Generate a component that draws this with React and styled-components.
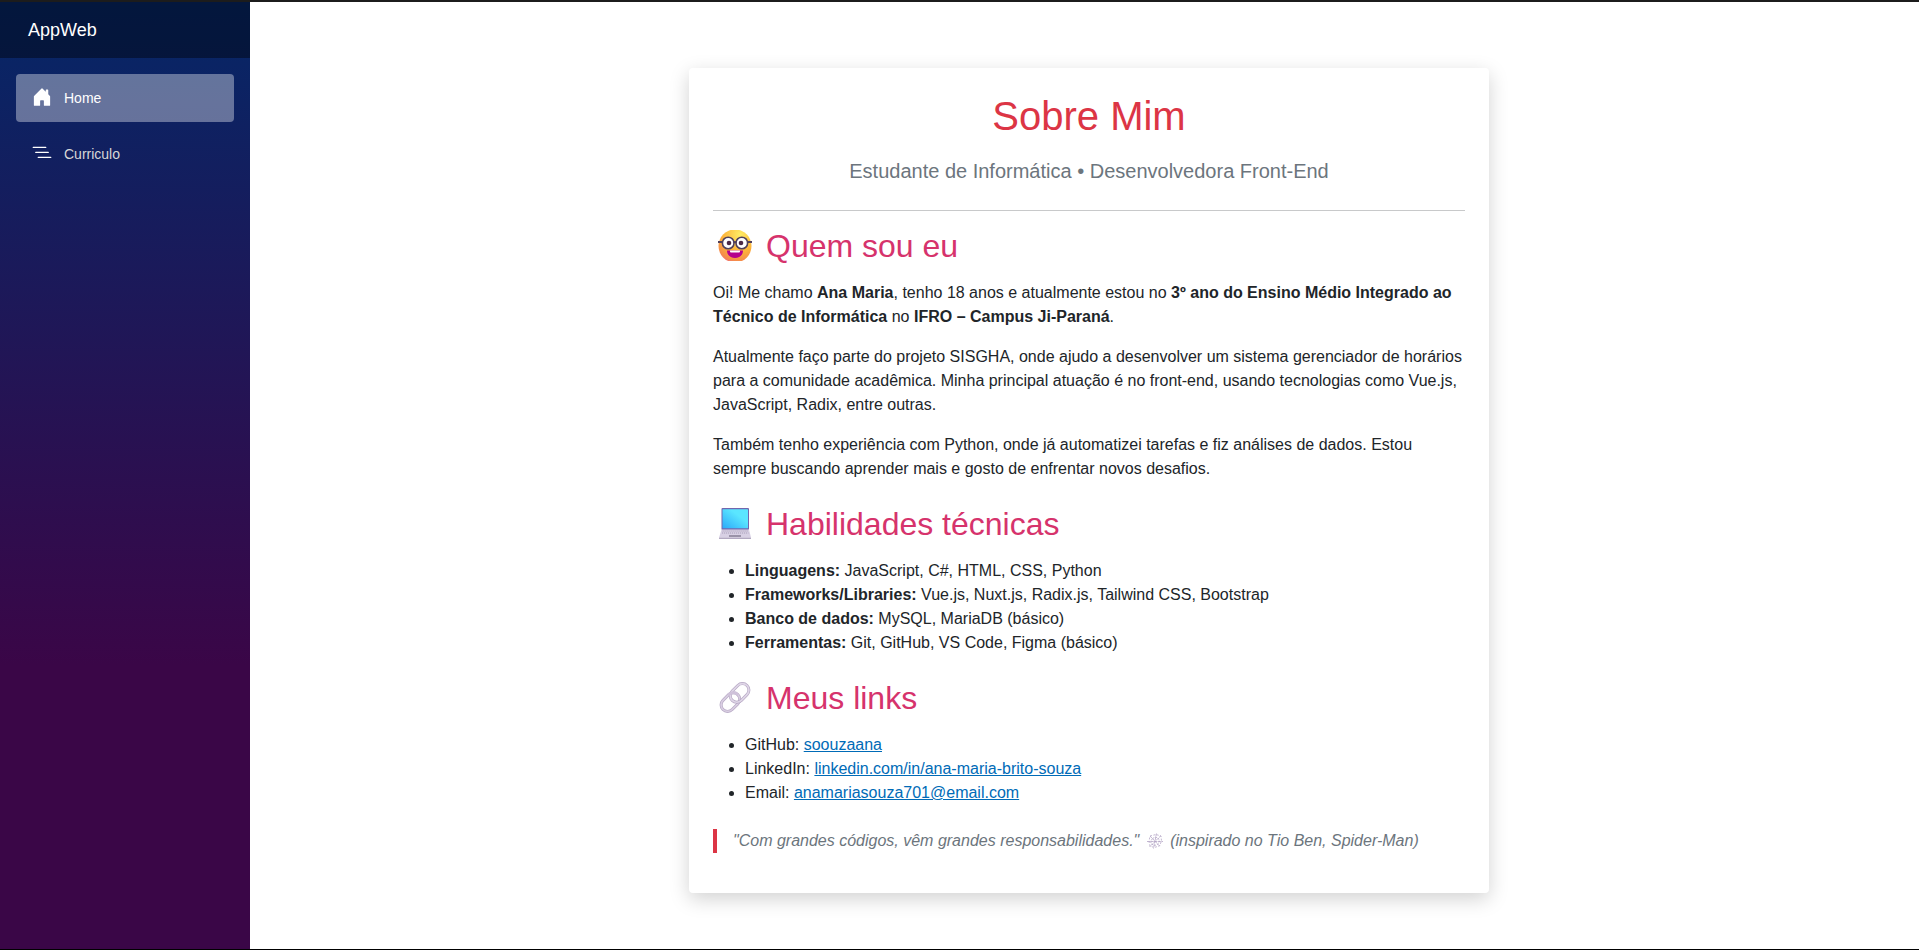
import React from "react";
import styled, { createGlobalStyle } from "styled-components";

const GlobalStyle = createGlobalStyle`
  *, *::before, *::after { box-sizing: border-box; }
  body {
    margin: 0;
    background: #fff;
    color: #212529;
    font-family: "Liberation Sans", Arial, sans-serif;
    font-size: 16px;
    line-height: 24px;
  }
`;

const Page = styled.div`
  display: flex;
  min-height: 100vh;
  border-top: 2px solid #1c1c1c;
  border-bottom: 1px solid #000;
`;

const Sidebar = styled.aside`
  flex: 0 0 250px;
  background: linear-gradient(180deg, rgb(5, 39, 103) 0%, #3a0647 70%);
`;

const TopRow = styled.div`
  display: flex;
  align-items: center;
  height: 56px;
  padding-left: 28px;
  background: rgba(0, 0, 0, 0.4);
`;

const Brand = styled.a`
  color: #fff;
  font-size: 18px;
  text-decoration: none;
`;

const Nav = styled.nav`
  display: flex;
  flex-direction: column;
  gap: 8px;
  padding: 16px;
`;

const NavLink = styled.a`
  display: flex;
  align-items: center;
  gap: 12px;
  height: 48px;
  padding: 0 16px;
  border-radius: 4px;
  color: ${({ $active }) => ($active ? "#fff" : "#d7d7d7")};
  background: ${({ $active }) => ($active ? "rgba(255, 255, 255, 0.37)" : "transparent")};
  font-size: 14px;
  text-decoration: none;
`;

const NavIcon = styled.svg`
  width: 20px;
  height: 20px;
  margin-bottom: 2px;
  fill: #fff;
`;

const Main = styled.main`
  flex: 1;
  min-width: 0;
  padding: 66px 24px 48px 33px;
`;

const Card = styled.article`
  max-width: 800px;
  margin: 0 auto;
  padding: 24px 24px 40px;
  border-radius: 4px;
  background: #fff;
  box-shadow: 0 6px 20px rgba(0, 0, 0, 0.18);
`;

const Title = styled.h1`
  margin: 0 0 16px;
  color: #dc3545;
  font-size: 40px;
  font-weight: 400;
  line-height: 48px;
  text-align: center;
`;

const Lead = styled.p`
  margin: 0 0 24px;
  color: #6c757d;
  font-size: 20px;
  line-height: 30px;
  text-align: center;
`;

const Divider = styled.hr`
  margin: 0 0 16px;
  border: 0;
  border-top: 1px solid #c8c9ca;
`;

const Section = styled.section`
  margin-bottom: 24px;
`;

const Heading = styled.h2`
  display: flex;
  align-items: center;
  gap: 9px;
  margin: 0 0 16px;
  color: #d6336c;
  font-size: 32px;
  font-weight: 400;
  line-height: 38px;
`;

const Emoji = styled.svg`
  width: 44px;
  height: 38px;
`;

const Text = styled.p`
  margin: 0 0 16px;
`;

const List = styled.ul`
  margin: 0;
  padding-left: 32px;
`;

const Link = styled.a`
  color: #006bb7;
  text-decoration: underline;
`;

const Quote = styled.blockquote`
  margin: 0;
  padding-left: 16px;
  border-left: 4px solid #dc3545;
  color: #6c757d;
  font-style: italic;
`;

const WebIcon = styled.svg`
  width: 16px;
  height: 16px;
  margin: 0 3px;
  vertical-align: -3px;
`;

function NerdFace() {
  return (
    <Emoji viewBox="0 0 44 38" role="img" aria-label="Rosto nerd">
      <defs>
        <radialGradient id="face" cx="0.65" cy="0.15" r="0.95">
          <stop offset="0" stopColor="#ffec65" />
          <stop offset="0.55" stopColor="#fdb43a" />
          <stop offset="0.85" stopColor="#f58b4b" />
          <stop offset="1" stopColor="#ef5f8b" />
        </radialGradient>
        <clipPath id="faceClip"><rect y="3" width="44" height="31" /></clipPath>
      </defs>
      <circle cx="22" cy="19" r="16.5" fill="url(#face)" clipPath="url(#faceClip)" />
      <circle cx="15.2" cy="16" r="5.8" fill="#fff" stroke="#50405c" strokeWidth="1.6" />
      <circle cx="28.8" cy="16" r="5.8" fill="#fff" stroke="#50405c" strokeWidth="1.6" />
      <path d="M5 15h4.500M34.500 15h4.500M20.500 15.500q1.500-1 3 0" stroke="#50405c" strokeWidth="1.800" fill="none" />
      <circle cx="16" cy="16" r="2.300" fill="#4a2946" />
      <circle cx="28" cy="16" r="2.300" fill="#4a2946" />
      <path d="M14 23.500h16c0 10-16 10-16 0z" fill="#b5008d" />
      <path d="M17 23.500h10v1q0 1-1 1h-8q-1 0-1-1z" fill="#fff" />
    </Emoji>
  );
}

function Laptop() {
  return (
    <Emoji viewBox="0 0 44 38" role="img" aria-label="Notebook">
      <defs>
        <linearGradient id="screen" x1="1" y1="0" x2="0" y2="1">
          <stop offset="0.35" stopColor="#5ae6ff" />
          <stop offset="1" stopColor="#2caafa" />
        </linearGradient>
      </defs>
      <rect x="8.500" y="3" width="27.500" height="22" rx="1" fill="#7266ae" />
      <rect x="9.500" y="4.200" width="25.500" height="19" rx="0.500" fill="url(#screen)" />
      <path d="M8.500 24.500h27.500l2 8h-32z" fill="#d8d0e4" />
      <path d="M9.500 26h25.500M9 28h26.500" stroke="#aaa0ba" strokeWidth="1" strokeDasharray="1.200 0.800" />
      <rect x="16" y="30" width="12" height="2" fill="#9a92a8" />
      <path d="M6 32.500h32v1.500h-32z" fill="#b3a9c2" />
    </Emoji>
  );
}

function Chain() {
  return (
    <Emoji viewBox="0 0 44 38" role="img" aria-label="Elo de corrente">
      <g fill="none" transform="rotate(-45 22 18.500)">
        <rect x="5" y="12" width="21" height="13" rx="6.500" stroke="#b6a8c4" strokeWidth="3" />
        <rect x="5" y="12" width="21" height="13" rx="6.500" stroke="#d9cee2" strokeWidth="1.700" />
        <rect x="18" y="12" width="21" height="13" rx="6.500" stroke="#b6a8c4" strokeWidth="3" />
        <rect x="18" y="12" width="21" height="13" rx="6.500" stroke="#dfd6e7" strokeWidth="1.700" />
        <path d="M19.500 12a6.500 6.500 0 0 1 6.500 6.500" stroke="#cfc2da" strokeWidth="2.800" />
      </g>
    </Emoji>
  );
}

function SpiderWeb() {
  return (
    <WebIcon viewBox="0 0 16 16" role="img" aria-label="Teia de aranha">
      <g fill="none" stroke="#b4a5c5" strokeWidth="0.800">
        <path d="M0 8.500h16M9.500 0.500L6.500 15.500M3 3l10 10.500M14 2.500L2.500 14" strokeDasharray="3 0.600" />
        <path d="M5.500 5.500l3-1.500 3 1.500 1 3-2 3-3 1-3-1.500-1-2.500z" strokeDasharray="2 1" />
        <path d="M3 3l6-1.500 5 1.500.500 5-2 5-5.500 1.500-4-1.500-1-4.500z" strokeDasharray="2 1.500" />
      </g>
    </WebIcon>
  );
}

const skills = [
  ["Linguagens:", "JavaScript, C#, HTML, CSS, Python"],
  ["Frameworks/Libraries:", "Vue.js, Nuxt.js, Radix.js, Tailwind CSS, Bootstrap"],
  ["Banco de dados:", "MySQL, MariaDB (básico)"],
  ["Ferramentas:", "Git, GitHub, VS Code, Figma (básico)"],
];

const links = [
  ["GitHub:", "soouzaana", "https://github.com/soouzaana"],
  ["LinkedIn:", "linkedin.com/in/ana-maria-brito-souza", "https://linkedin.com/in/ana-maria-brito-souza"],
  ["Email:", "anamariasouza701@email.com", "mailto:anamariasouza701@email.com"],
];

export default function App() {
  return (
    <>
      <GlobalStyle />
      <Page>
        <Sidebar>
          <TopRow>
            <Brand href="#">AppWeb</Brand>
          </TopRow>
          <Nav>
            <NavLink href="#" $active aria-current="page">
              <NavIcon viewBox="0 0 16 16" aria-hidden="true">
                <path d="M6.500 14.500v-3.505c0-.245.25-.495.5-.495h2c.25 0 .5.25.5.5v3.500a.5.5 0 0 0 .5.5h4a.5.5 0 0 0 .5-.5v-7a.5.5 0 0 0-.146-.354L13 5.793V2.500a.5.5 0 0 0-.5-.5h-1a.5.5 0 0 0-.5.5v1.293L8.354 1.146a.5.5 0 0 0-.708 0l-6 6A.5.5 0 0 0 1.500 7.500v7a.5.5 0 0 0 .5.5h4a.5.5 0 0 0 .5-.5Z" />
              </NavIcon>
              Home
            </NavLink>
            <NavLink href="#curriculo">
              <NavIcon viewBox="0 0 16 16" aria-hidden="true">
                <path d="M4.500 11.500A.5.5 0 0 1 5 11h10a.5.5 0 0 1 0 1H5a.5.5 0 0 1-.5-.5zm-2-4A.5.5 0 0 1 3 7h10a.5.5 0 0 1 0 1H3a.5.5 0 0 1-.5-.5zm-2-4A.5.5 0 0 1 1 3h10a.5.5 0 0 1 0 1H1a.5.5 0 0 1-.5-.5z" />
              </NavIcon>
              Curriculo
            </NavLink>
          </Nav>
        </Sidebar>
        <Main>
          <Card>
            <Title>Sobre Mim</Title>
            <Lead>Estudante de Informática • Desenvolvedora Front-End</Lead>
            <Divider />
            <Section>
              <Heading><NerdFace />Quem sou eu</Heading>
              <Text>
                Oi! Me chamo <strong>Ana Maria</strong>, tenho 18 anos e atualmente estou no{" "}
                <strong>3º ano do Ensino Médio Integrado ao Técnico de Informática</strong> no{" "}
                <strong>IFRO – Campus Ji-Paraná</strong>.
              </Text>
              <Text>
                Atualmente faço parte do projeto SISGHA, onde ajudo a desenvolver um sistema gerenciador de
                horários para a comunidade acadêmica. Minha principal atuação é no front-end, usando
                tecnologias como Vue.js, JavaScript, Radix, entre outras.
              </Text>
              <Text>
                Também tenho experiência com Python, onde já automatizei tarefas e fiz análises de dados.
                Estou sempre buscando aprender mais e gosto de enfrentar novos desafios.
              </Text>
            </Section>
            <Section>
              <Heading><Laptop />Habilidades técnicas</Heading>
              <List>
                {skills.map(([label, value]) => (
                  <li key={label}><strong>{label}</strong> {value}</li>
                ))}
              </List>
            </Section>
            <Section>
              <Heading><Chain />Meus links</Heading>
              <List>
                {links.map(([label, text, href]) => (
                  <li key={label}>{label} <Link href={href}>{text}</Link></li>
                ))}
              </List>
            </Section>
            <Quote>
              "Com grandes códigos, vêm grandes responsabilidades." <SpiderWeb /> (inspirado no Tio Ben, Spider-Man)
            </Quote>
          </Card>
        </Main>
      </Page>
    </>
  );
}
